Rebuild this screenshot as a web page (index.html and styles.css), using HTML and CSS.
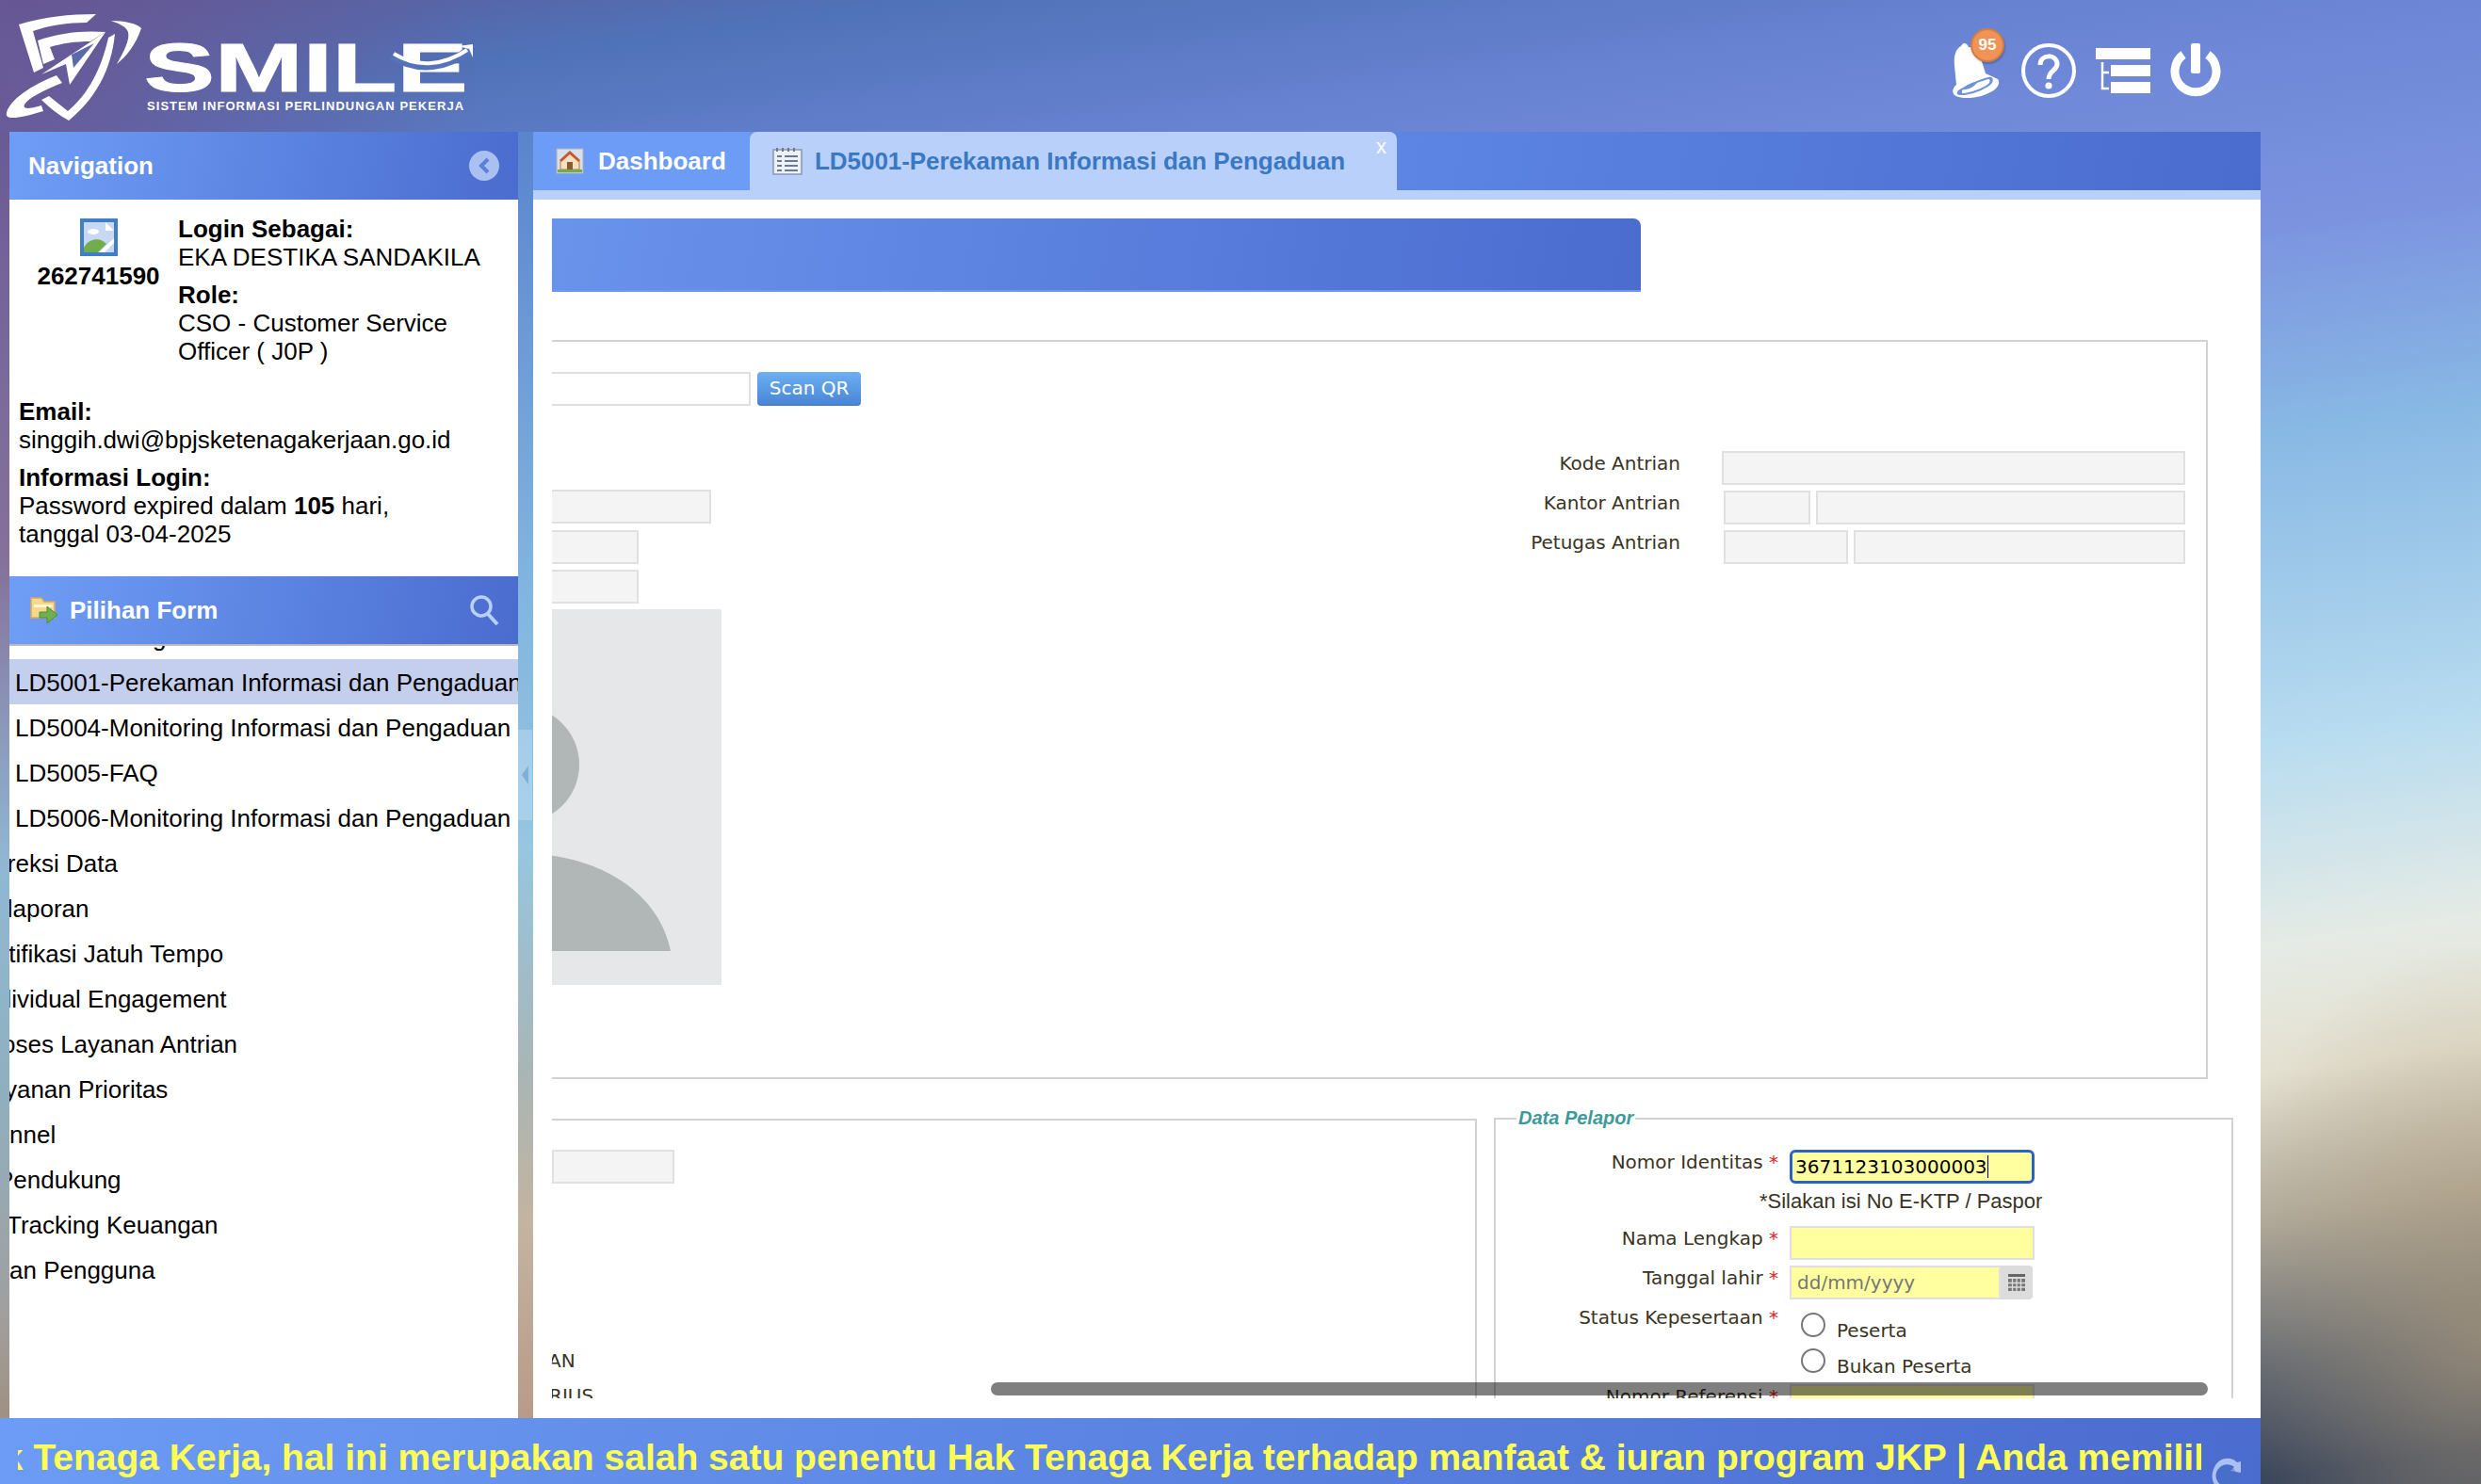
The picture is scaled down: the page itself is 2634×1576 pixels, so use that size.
FILE: index.html
```html
<!DOCTYPE html>
<html lang="id">
<head>
    <meta charset="UTF-8">
    <meta name="viewport" content="width=device-width, initial-scale=1.0">
    <title>SMILE - Sistem Informasi Perlindungan Pekerja</title>
    <link rel="stylesheet" href="styles.css">
</head>
<body>
    <div class="page">
        <header class="topbar">
            <div class="logo">
                <svg class="logo-mark" viewBox="0 0 153 125" width="153" height="125">
                    <path d="M20 16 C45 8 75 5 102 5 L92 14 C72 14 52 17 35 23 L46 62 L36 67 Z" fill="#fff"/>
                    <path d="M40 33 C62 25 88 22 112 24 L96 34 C80 34 66 36 53 40 L58 53 L46 58 Z" fill="#fff"/>
                    <path d="M112 24 L74 80 L70 58 L44 69 Z" fill="#fff"/>
                    <path d="M100 36 L76 48 L78 62 Z" fill="#5c6aa8"/>
                    <path d="M52 92 L72 108 C94 90 108 62 115 30 L122 26 C118 66 100 96 73 118 C62 112 52 104 44 96 Z" fill="#fff"/>
                    <path d="M60 70 C34 80 10 96 7 110 C5 118 20 116 46 108 L44 102 C30 106 24 106 26 101 C30 94 46 86 66 78 Z" fill="#fff"/>
                    <path d="M118 12 C132 12 146 15 150 20 C144 38 134 50 124 58 C132 44 138 32 136 24 C134 18 126 15 118 12 Z" fill="#fff"/>
                </svg>
                <div class="logo-text">
                    <div class="logo-word">SMILE</div>
                    <div class="logo-sub">SISTEM INFORMASI PERLINDUNGAN PEKERJA</div>
                    <svg class="logo-swoosh" viewBox="0 0 100 40" width="100" height="40">
                        <path d="M6 14 C34 32 66 26 88 8" fill="none" stroke="#5573bb" stroke-width="9"/>
                        <path d="M8 12 C34 28 62 24 86 8" fill="none" stroke="#fff" stroke-width="4"/>
                        <path d="M76 4 L92 2 L92 16 L88 7 Z" fill="#fff"/>
                    </svg>
                </div>
            </div>
            <div class="top-icons">
                <div class="bell-wrap">
                    <svg viewBox="0 0 52 58" width="52" height="58">
                        <path d="M14 0 C17 0 18 2 19 4 C26 4 31 10 32 16 L37 32 L50 38 C53 42 50 48 42 52 C30 59 10 60 4 55 C1 52 2 47 6 44 L4 24 C3 14 5 6 11 3 C12 1 13 0 14 0 Z" fill="#fff"/>
                        <path d="M8 50 C14 46 30 38 40 36 C44 35 46 38 44 42 C40 48 20 56 10 55 C6 55 6 52 8 50 Z" fill="#7191d9"/>
                        <path d="M12 50 C18 46 32 40 40 38 C42 38 42 41 40 43 C36 47 20 53 12 53 Z" fill="#fff"/>
                        <path d="M12 49 C16 44 24 41 28 41 C26 46 18 50 12 49 Z" fill="#7191d9"/>
                    </svg>
                    <span class="badge">95</span>
                </div>
                <svg viewBox="0 0 58 58" width="58" height="58">
                    <circle cx="29" cy="29" r="27" fill="none" stroke="#fff" stroke-width="4"/>
                    <path d="M20 23 C20 11 38 11 38 22 C38 29 29 29 29 38" fill="none" stroke="#fff" stroke-width="5"/>
                    <circle cx="29" cy="45" r="3.600" fill="#fff"/>
                </svg>
                <svg viewBox="0 0 58 50" width="58" height="50">
                    <rect x="0" y="1" width="58" height="12" fill="#fff"/>
                    <rect x="16" y="19" width="42" height="12" fill="#fff"/>
                    <rect x="16" y="37" width="42" height="12" fill="#fff"/>
                    <path d="M7 16 V44 H14 M7 27 H14" fill="none" stroke="#fff" stroke-width="2.500"/>
                </svg>
                <svg viewBox="0 0 54 58" width="54" height="58">
                    <path d="M14 12 A22 22 0 1 0 40 12" fill="none" stroke="#fff" stroke-width="9"/>
                    <rect x="22" y="0" width="10" height="32" rx="2" fill="#fff"/>
                </svg>
            </div>
        </header>

        <div class="workspace">
            <aside class="sidebar">
                <div class="panel-head">
                    <span class="panel-title">Navigation</span>
                    <span class="collapse-btn">
                        <svg viewBox="0 0 14 18" width="14" height="18"><path d="M11 2 L4 9 L11 16" fill="none" stroke="#5a82d8" stroke-width="4"/></svg>
                    </span>
                </div>
                <div class="profile">
                    <div class="profile-top">
                        <div class="profile-id">
                            <svg class="broken-img" viewBox="0 0 40 40" width="40" height="40">
                                <rect width="40" height="40" fill="#3f7fc6"/>
                                <rect x="4" y="4" width="32" height="32" fill="#c9d8f2"/>
                                <path d="M27 4 L36 13 H27 Z" fill="#fff"/>
                                <path d="M4 36 V31 C10 20 22 20 28 27 L19 36 Z" fill="#6fae4a"/>
                                <path d="M20 36 L36 21 V26 L26 36 Z" fill="#fff"/>
                                <ellipse cx="14" cy="14" rx="6" ry="3" fill="#fff"/>
                            </svg>
                            <b>262741590</b>
                        </div>
                        <div class="profile-info">
                            <p><b>Login Sebagai:</b><br>EKA DESTIKA SANDAKILA</p>
                            <p><b>Role:</b><br>CSO - Customer Service Officer ( J0P )</p>
                        </div>
                    </div>
                    <p class="profile-line email-line"><b>Email:</b><br>singgih.dwi@bpjsketenagakerjaan.go.id</p>
                    <p class="profile-line"><b>Informasi Login:</b><br>Password expired dalam <b>105</b> hari,<br>tanggal 03-04-2025</p>
                </div>
                <div class="panel-head form-head">
                    <span class="panel-title">
                        <svg viewBox="0 0 30 32" width="30" height="32">
                            <path d="M1 3 H12 L15 7 H26 V24 H1 Z" fill="#f2d98c" stroke="#d8a860" stroke-width="1.500"/>
                            <rect x="4" y="10" width="20" height="3" fill="#fff6d0"/>
                            <path d="M10 18 H18 V12 L29 21 L18 30 V24 H10 Z" fill="#6fb04e" stroke="#4e8a38"/>
                        </svg>
                        Pilihan Form
                    </span>
                    <svg class="search-icon" viewBox="0 0 32 34" width="32" height="34">
                        <circle cx="13" cy="13" r="10" fill="none" stroke="#b9d0fa" stroke-width="3.500"/>
                        <path d="M20 21 L30 32" stroke="#b9d0fa" stroke-width="4"/>
                    </svg>
                </div>
                <div class="menu">
                    <ul class="menu-list">
                        <li class="sub">LD4003-Pengaduan</li>
                        <li class="sub active">LD5001-Perekaman Informasi dan Pengaduan</li>
                        <li class="sub">LD5004-Monitoring Informasi dan Pengaduan</li>
                        <li class="sub">LD5005-FAQ</li>
                        <li class="sub">LD5006-Monitoring Informasi dan Pengaduan</li>
                        <li class="cut">Koreksi Data</li>
                        <li class="cut">Pelaporan</li>
                        <li class="cut">Notifikasi Jatuh Tempo</li>
                        <li class="cut">Individual Engagement</li>
                        <li class="cut">Proses Layanan Antrian</li>
                        <li class="cut">Layanan Prioritas</li>
                        <li>nnel</li>
                        <li class="cut-mid">Pendukung</li>
                        <li class="cut-edge">Tracking Keuangan</li>
                        <li>an Pengguna</li>
                    </ul>
                </div>
            </aside>

            <div class="splitter">
                <div class="splitter-handle"><span class="splitter-arrow"></span></div>
            </div>

            <main class="main">
                <div class="tabs">
                    <div class="tab">
                        <svg viewBox="0 0 30 28" width="30" height="28">
                            <rect x="1" y="1" width="28" height="26" fill="#d9dfe8" stroke="#a8b0bc"/>
                            <path d="M5 14 L15 5 L25 14 V23 H5 Z" fill="#f4e0c0" stroke="#b87840"/>
                            <path d="M5 14 L15 5 L25 14" fill="none" stroke="#c05a30" stroke-width="3"/>
                            <rect x="12" y="15" width="6" height="8" fill="#8a5a30"/>
                            <rect x="2" y="23" width="26" height="3" fill="#6fae4a"/>
                        </svg>
                        Dashboard
                    </div>
                    <div class="tab active">
                        <svg viewBox="0 0 32 30" width="32" height="30">
                            <rect x="1" y="3" width="30" height="26" fill="#eef2f8" stroke="#8a98ac" stroke-width="1.500"/>
                            <path d="M5 1 V5 M11 1 V5 M17 1 V5 M23 1 V5" stroke="#6a788c" stroke-width="2"/>
                            <path d="M5 10 H10 M5 15 H10 M5 20 H10 M5 25 H10 M13 10 H27 M13 15 H27 M13 20 H27 M13 25 H27" stroke="#6a7a94" stroke-width="2"/>
                        </svg>
                        LD5001-Perekaman Informasi dan Pengaduan
                        <span class="tab-close">x</span>
                    </div>
                </div>
                <div class="tab-strip"></div>
                <div class="content">
                    <div class="form-area">
                        <div class="form-band"></div>

                        <section class="box box-top">
                            <div class="box-left">
                                <div class="qr-row">
                                    <input class="field qr-input" type="text">
                                    <button class="scan-btn" type="button">Scan QR</button>
                                </div>
                                <input class="field ro w169" type="text" disabled>
                                <input class="field ro w92" type="text" disabled>
                                <input class="field ro w92" type="text" disabled>
                                <div class="avatar">
                                    <svg viewBox="0 0 180 399" width="180" height="399">
                                        <circle cx="-33" cy="165" r="62" fill="#b1b6b6"/>
                                        <path d="M-60 363 V262 C20 250 110 285 126 363 Z" fill="#b1b6b6"/>
                                    </svg>
                                </div>
                            </div>
                            <div class="antrian">
                                <div class="antrian-row">
                                    <label>Kode Antrian</label>
                                    <div class="antrian-fields kode"><input class="field ro" type="text" disabled></div>
                                </div>
                                <div class="antrian-row">
                                    <label>Kantor Antrian</label>
                                    <div class="antrian-fields"><input class="field ro w92" type="text" disabled><input class="field ro grow" type="text" disabled></div>
                                </div>
                                <div class="antrian-row">
                                    <label>Petugas Antrian</label>
                                    <div class="antrian-fields"><input class="field ro w132" type="text" disabled><input class="field ro grow" type="text" disabled></div>
                                </div>
                            </div>
                        </section>

                        <div class="box-pair">
                            <section class="box box-info">
                                <input class="field ro w130" type="text" disabled>
                                <div class="cut-label an">AN</div>
                                <div class="cut-label rius">RIUS</div>
                            </section>
                            <fieldset class="box box-pelapor">
                                <legend>Data Pelapor</legend>
                                <div class="form-row">
                                    <label>Nomor Identitas <i>*</i></label>
                                    <div class="value-focus">3671123103000003<span class="caret"></span></div>
                                </div>
                                <div class="hint">*Silakan isi No E-KTP / Paspor</div>
                                <div class="form-row">
                                    <label>Nama Lengkap <i>*</i></label>
                                    <input class="field req" type="text">
                                </div>
                                <div class="form-row">
                                    <label>Tanggal lahir <i>*</i></label>
                                    <div class="date-box">
                                        <input class="field req date-input" type="text" placeholder="dd/mm/yyyy">
                                        <span class="date-btn">
                                            <svg viewBox="0 0 20 20" width="20" height="20">
                                                <rect x="1" y="1" width="18" height="3" fill="#666"/>
                                                <path d="M1 6 H19 V19 H1 Z" fill="#777"/>
                                                <path d="M5.500 6 V19 M10 6 V19 M14.500 6 V19 M1 10.500 H19 M1 15 H19" stroke="#ddd" stroke-width="1.300"/>
                                            </svg>
                                        </span>
                                    </div>
                                </div>
                                <div class="form-row">
                                    <label>Status Kepesertaan <i>*</i></label>
                                    <div class="radio-list">
                                        <div class="radio-item"><span class="radio"></span><span>Peserta</span></div>
                                        <div class="radio-item"><span class="radio"></span><span>Bukan Peserta</span></div>
                                    </div>
                                </div>
                                <div class="form-row">
                                    <label>Nomor Referensi <i>*</i></label>
                                    <input class="field req" type="text">
                                </div>
                            </fieldset>
                        </div>
                    </div>
                    <div class="h-scroll"></div>
                </div>
            </main>
        </div>

        <footer class="ticker">
            <div class="ticker-clip">Hak Tenaga Kerja, hal ini merupakan salah satu penentu Hak Tenaga Kerja terhadap manfaat &amp; iuran program JKP | Anda memiliki</div>
            <svg class="reload" viewBox="0 0 34 34" width="34" height="34">
                <path d="M31 8 L31 20 L20 18 L24 14 C18 9 8 11 5 20 C3 27 8 33 14 36 L6 36 C0 31 -1 22 3 14 C8 4 20 2 27 9 Z" fill="#a9c0f0"/>
                <path d="M22 14 C16 10 8 13 6 20 C5 27 9 32 15 35 L28 35 L28 22 Z" fill="#4472c4" opacity="0.5"/>
            </svg>
        </footer>
    </div>
</body>
</html>
```

FILE: styles.css
```css
* {
    box-sizing: border-box;
}
html, body {
    margin: 0;
    padding: 0;
}
body {
    font-family: "Liberation Sans", Arial, sans-serif;
    color: #000;
    background: #fff;
}
.page {
    width: 2634px;
    height: 1576px;
    overflow: hidden;
    display: flex;
    flex-direction: column;
    background-color: #5072b8;
    background-image:
        linear-gradient(180deg, #6a5a94 0, #7a6a9a 260px, #85709a 450px, #90b8d4 780px, #8fb0c0 1010px, #a0a0a0 1250px, #a09080 1366px),
        linear-gradient(180deg, #5a84cc 0, #5f8bd0 70px, #80b4e0 470px, #96c6e0 760px, #a9b5b5 1000px, #c3b4a0 1160px, #b99a88 1366px),
        radial-gradient(ellipse 300px 420px at 2634px 1420px, rgba(176, 156, 124, .65), rgba(176, 156, 124, 0)),
        radial-gradient(ellipse 520px 340px at 0 110px, rgba(112, 84, 144, .8), rgba(112, 84, 144, 0)),
        linear-gradient(172deg, #5c5a98 0%, #5072b8 7%, #6a84d4 17%, #7c94e0 30%, #88b8e4 41%, #b8dcf0 58%, #e5ebe5 69%, #e4e0d0 76%, #b0aa9c 84%, #5c6470 92%, #2e3d58 98%);
    background-repeat: no-repeat;
    background-position: 0 140px, 550px 140px, 0 0, 0 0, 0 0;
    background-size: 10px 1366px, 16px 1366px, 100% 100%, 100% 100%, 100% 100%;
}

/* top bar */
.topbar {
    height: 140px;
    flex: none;
    display: flex;
    justify-content: space-between;
    align-items: flex-start;
}
.logo {
    display: flex;
    align-items: flex-start;
    padding-top: 10px;
}
.logo-text {
    margin: 35px 0 0 0;
    color: #fff;
    position: relative;
}
.logo-word {
    font-weight: bold;
    font-size: 73px;
    line-height: 53px;
    height: 53px;
    -webkit-text-stroke: 1px #fff;
    transform: scaleX(1.54);
    transform-origin: left;
}
.logo-sub {
    font-weight: bold;
    font-size: 13px;
    line-height: 16px;
    letter-spacing: 1.050px;
    margin: 7px 0 0 3px;
    white-space: nowrap;
}
.logo-swoosh {
    position: absolute;
    left: 257px;
    top: 0;
}
.top-icons {
    display: flex;
    align-items: center;
    gap: 21px;
    margin: 46px 276px 0 0;
}
.bell-wrap {
    position: relative;
    height: 58px;
    margin-right: 2px;
}
.badge {
    position: absolute;
    left: 21px;
    top: -16px;
    width: 36px;
    height: 36px;
    border-radius: 50%;
    background: #f09355;
    border: 2px solid #cf7e4a;
    color: #fff;
    font-size: 17px;
    font-weight: bold;
    line-height: 32px;
    text-align: center;
    box-shadow: 1px 2px 2px rgba(0, 0, 0, .2);
}

/* workspace */
.workspace {
    flex: 1;
    display: flex;
    min-height: 0;
    padding-left: 10px;
}
.sidebar {
    width: 540px;
    flex: none;
    background: #fff;
    display: flex;
    flex-direction: column;
}
.panel-head {
    height: 72px;
    flex: none;
    padding: 0 20px;
    display: flex;
    align-items: center;
    justify-content: space-between;
    background: linear-gradient(100deg, #6f9ef6, #4a6ccf);
}
.panel-title {
    color: #fff;
    font-size: 26px;
    font-weight: bold;
    display: flex;
    align-items: center;
    gap: 12px;
}
.collapse-btn {
    width: 32px;
    height: 32px;
    border-radius: 50%;
    background: #a9c0f0;
    display: flex;
    align-items: center;
    justify-content: center;
}
.profile {
    height: 400px;
    flex: none;
    padding: 16px 10px 0;
    font-size: 26px;
    line-height: 30px;
}
.profile p {
    margin: 0;
}
.profile-top {
    display: flex;
}
.profile-id {
    width: 169px;
    flex: none;
    display: flex;
    flex-direction: column;
    align-items: center;
}
.broken-img {
    margin: 4px 0 6px;
}
.profile .profile-info p {
    margin-bottom: 10px;
}
.profile .profile-line {
    margin-top: 10px;
}
.profile .email-line {
    margin-top: 24px;
}
.form-head {
    padding-left: 22px;
}
.menu {
    flex: 1;
    min-height: 0;
    border-top: 2px solid #bcbcbc;
    overflow: hidden;
    font-size: 26px;
}
.menu-list {
    list-style: none;
    margin: -34px 0 0 0;
    padding: 0;
}
.menu-list li {
    height: 48px;
    line-height: 50px;
    white-space: nowrap;
    overflow: hidden;
}
.menu-list .sub {
    padding-left: 6px;
}
.menu-list .active {
    background: #c3cfec;
}
/* list is scrolled sideways, the top level items start left of the panel */
.menu-list .cut {
    text-indent: -34px;
}
.menu-list .cut-mid {
    text-indent: -13px;
}
.menu-list .cut-edge {
    text-indent: -3px;
}

/* splitter */
.splitter {
    width: 16px;
    flex: none;
    position: relative;
}
.splitter-handle {
    position: absolute;
    left: 0;
    top: 635px;
    width: 15px;
    height: 96px;
    background: rgba(190, 220, 245, .5);
    display: flex;
    align-items: center;
    justify-content: center;
}
.splitter-arrow {
    width: 0;
    height: 0;
    border-right: 7px solid #7fb0dc;
    border-top: 10px solid transparent;
    border-bottom: 10px solid transparent;
}

/* main */
.main {
    width: 1834px;
    flex: none;
    background: #fff;
    display: flex;
    flex-direction: column;
    min-height: 0;
}
.tabs {
    height: 62px;
    flex: none;
    display: flex;
    background: linear-gradient(100deg, #6f9ef6, #4a6ccf);
}
.tab {
    width: 230px;
    padding: 0 0 0 24px;
    display: flex;
    align-items: center;
    gap: 15px;
    background: #6c9cf5;
    color: #fff;
    font-size: 26px;
    font-weight: bold;
    position: relative;
}
.tab.active {
    width: 687px;
    padding-left: 24px;
    gap: 13px;
    background: #b9d0fa;
    color: #3a78c4;
    border-radius: 8px 8px 0 0;
    white-space: nowrap;
    letter-spacing: -.05px;
}
.tab-close {
    position: absolute;
    right: 11px;
    top: 3px;
    color: #fff;
    font-size: 22px;
    font-weight: normal;
}
.tab-strip {
    height: 10px;
    flex: none;
    background: #b9d0fa;
}
.content {
    flex: 1;
    min-height: 0;
    position: relative;
    padding: 0 0 21px 20px;
    display: flex;
    flex-direction: column;
}
.form-area {
    flex: 1;
    min-height: 0;
    overflow: hidden;
}
.form-band {
    width: 1156px;
    height: 78px;
    margin-top: 20px;
    background: linear-gradient(100deg, #6a93ec, #4a6ccf);
    border-bottom: 2px solid #6f97ee;
    border-top-right-radius: 8px;
}

.box {
    border: 2px solid #d2d2d2;
    border-left: 0;
}
.box-top {
    width: 1758px;
    height: 785px;
    margin-top: 51px;
    display: flex;
    justify-content: space-between;
}
.box-left {
    width: 400px;
    display: flex;
    flex-direction: column;
    align-items: flex-start;
    padding-top: 32px;
}
.qr-row {
    display: flex;
    gap: 7px;
    margin-bottom: 89px;
}
.field {
    display: block;
    height: 36px;
    padding: 0 6px;
    border: 2px solid #e0e0e0;
    background: #fff;
    border-radius: 0;
    font-family: "DejaVu Sans", sans-serif;
    font-size: 20px;
    outline: 0;
}
.field::placeholder {
    color: #777;
}
.qr-input {
    width: 211px;
    border-left: 0;
}
.scan-btn {
    width: 110px;
    height: 36px;
    padding: 0;
    border: 0;
    border-bottom: 2px solid #4a7fcc;
    border-radius: 4px;
    background: linear-gradient(#6cb0f2, #4a86d8);
    color: #fff;
    font-family: "DejaVu Sans", sans-serif;
    font-size: 20px;
}
.ro {
    background: #f4f4f4;
}
.box-left .ro {
    border-left: 0;
    margin-bottom: 6px;
}
.box-left .w169 {
    margin-bottom: 7px;
}
.w169 { width: 169px; }
.w92 { width: 92px; flex: none; }
.w132 { width: 132px; flex: none; }
.w130 { width: 130px; }
.grow { flex: 1; min-width: 0; }
.avatar {
    width: 180px;
    height: 399px;
    background: #e6e7e8;
}
.avatar svg {
    display: block;
}
.antrian {
    width: 710px;
    margin-right: 22px;
    padding-top: 116px;
    display: flex;
    flex-direction: column;
    gap: 6px;
}
.antrian-row {
    display: flex;
    align-items: center;
    height: 36px;
}
.antrian-row label {
    width: 174px;
    text-align: right;
    color: #3a3324;
    font-family: "DejaVu Sans", sans-serif;
    font-size: 20px;
    white-space: nowrap;
    margin-top: -11px;
}
.antrian-fields {
    flex: 1;
    display: flex;
    gap: 6px;
    margin-left: 46px;
}
.antrian-fields.kode {
    margin-left: 44px;
}
.antrian-fields.kode .field {
    width: 100%;
}

.box-pair {
    display: flex;
    align-items: flex-start;
    margin-top: 42px;
    gap: 18px;
}
.box-info {
    width: 982px;
    height: 330px;
    padding-top: 31px;
    flex: none;
}
.cut-label {
    font-family: "DejaVu Sans", sans-serif;
    font-size: 20px;
    color: #3a3324;
    line-height: 24px;
    white-space: nowrap;
}
.cut-label.an {
    margin: 176px 0 0 -4px;
}
.cut-label.rius {
    margin: 13px 0 0 -3px;
}
.box-pelapor {
    width: 785px;
    height: 330px;
    margin: -12px 0 0 0;
    padding: 22px 0 0 0;
    flex: none;
    border-left: 2px solid #d2d2d2;
    border-bottom: 0;
    min-width: 0;
}
.box-pelapor legend {
    margin-left: 22px;
    padding: 0 2px;
    color: #3d9a9a;
    font-size: 20px;
    font-weight: bold;
    font-style: italic;
}
.form-row {
    display: flex;
    align-items: flex-start;
    margin-bottom: 6px;
}
.form-row label {
    width: 312px;
    flex: none;
    text-align: right;
    padding-right: 12px;
    color: #3a3324;
    font-family: "DejaVu Sans", sans-serif;
    font-size: 20px;
    line-height: 26px;
    white-space: nowrap;
}
.form-row label i {
    color: #e02020;
    font-style: normal;
}
.form-row .field {
    width: 260px;
}
.req {
    background: #ffffa0;
}
.value-focus {
    width: 260px;
    height: 36px;
    border: 3px solid #2a62c8;
    border-radius: 6px;
    background: #ffffa0;
    font-family: "DejaVu Sans", sans-serif;
    font-size: 20px;
    padding-left: 3px;
    display: flex;
    align-items: center;
}
.caret {
    width: 1px;
    height: 24px;
    background: #000;
}
.hint {
    margin: 7px 0 14px 280px;
    font-size: 22px;
    line-height: 24px;
    color: #3a3324;
    white-space: nowrap;
}
.date-box {
    display: flex;
    width: 258px;
}
.form-row .date-input {
    width: 224px;
}
.date-btn {
    width: 34px;
    height: 36px;
    background: #dcdcdc;
    border-radius: 0 4px 4px 0;
    display: flex;
    align-items: center;
    justify-content: center;
}
.radio-list {
    padding: 8px 0 5px 12px;
    display: flex;
    flex-direction: column;
    gap: 11px;
}
.radio-item {
    display: flex;
    align-items: flex-start;
    gap: 12px;
    color: #3a3324;
    font-family: "DejaVu Sans", sans-serif;
    font-size: 20px;
    line-height: 24px;
    height: 27px;
}
.radio-item span:last-child {
    margin-top: 7px;
}
.radio {
    width: 26px;
    height: 26px;
    border-radius: 50%;
    border: 2px solid #777;
    background: #fff;
}
.h-scroll {
    position: absolute;
    left: 486px;
    right: 56px;
    bottom: 24px;
    height: 14px;
    border-radius: 7px;
    background: rgba(0, 0, 0, .5);
}

/* ticker */
.ticker {
    width: 2400px;
    height: 70px;
    flex: none;
    display: flex;
    align-items: flex-start;
    background: linear-gradient(100deg, #6c9cf5, #4a6ccf);
    overflow: hidden;
}
.ticker-clip {
    width: 2318px;
    margin-left: 19px;
    padding-top: 20px;
    flex: none;
    overflow: hidden;
    white-space: nowrap;
    text-indent: -66px;
    color: #ffff55;
    font-size: 39px;
    font-weight: bold;
}
.reload {
    margin: 38px 0 0 11px;
    flex: none;
}
```
